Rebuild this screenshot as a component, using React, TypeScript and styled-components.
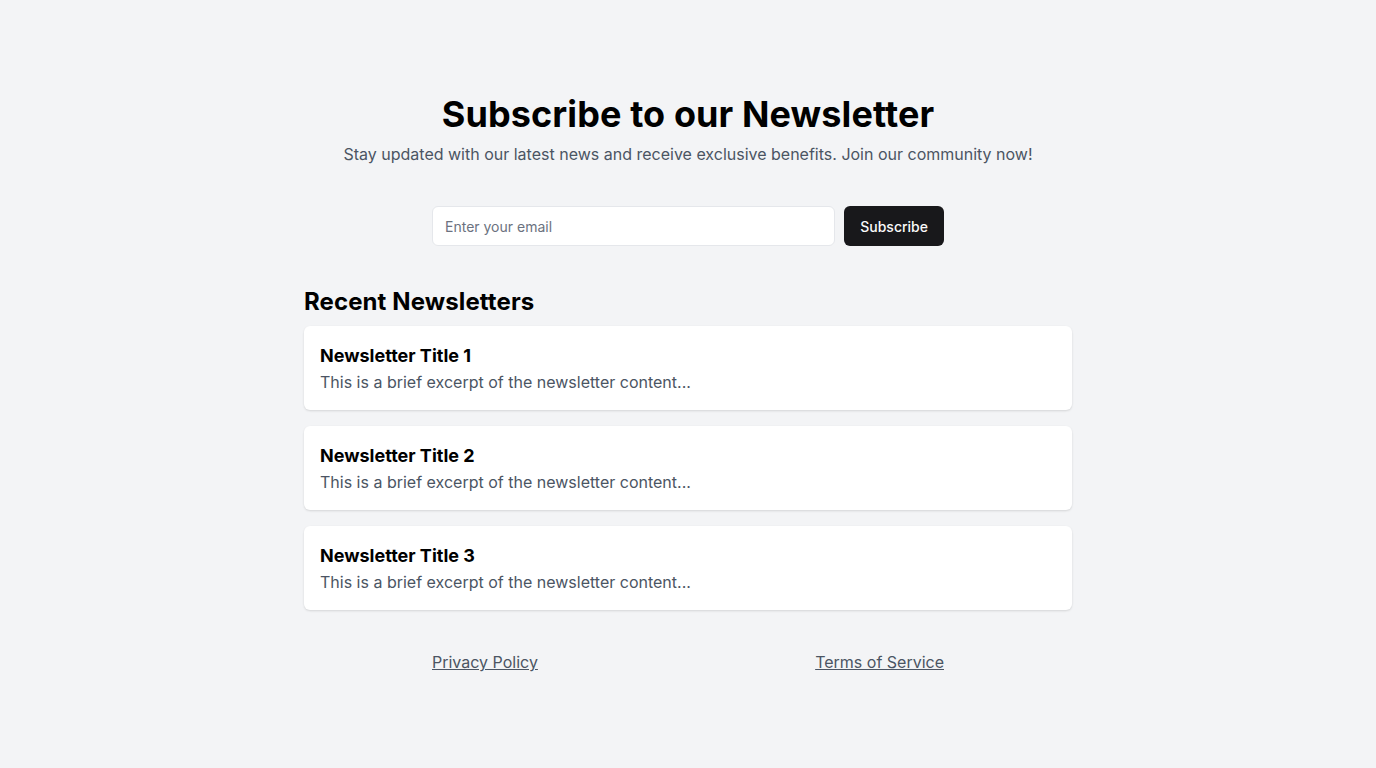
import React from "react";
import styled, { createGlobalStyle } from "styled-components";

const Global = createGlobalStyle`
  html, body { margin: 0; padding: 0; }
  body {
    background: #f3f4f6;
    font-family: Inter, "Noto Sans", sans-serif;
    color: #000;
  }
  * { box-sizing: border-box; }
`;

const Page = styled.main`
  min-height: 100vh;
  display: flex;
  flex-direction: column;
  align-items: center;
  justify-content: center;
  padding: 0 16px;
`;

const Title = styled.h1`
  margin: 0;
  font-size: 36px;
  line-height: 40px;
  font-weight: 700;
  letter-spacing: 0.1px;
  text-align: center;
`;

const Subtitle = styled.p`
  margin: 8px 0 40px;
  font-size: 16px;
  line-height: 24px;
  color: #4b5563;
  text-align: center;
`;

const Form = styled.form`
  width: 512px;
  display: flex;
  gap: 9px;
  margin-bottom: 40px;
`;

const Input = styled.input`
  flex: 1;
  height: 40px;
  padding: 0 12px;
  border: 1px solid #e5e7eb;
  border-radius: 6px;
  background: #fff;
  font-family: inherit;
  font-size: 14px;
  outline: none;
  &::placeholder { color: #6b7280; }
`;

const Button = styled.button`
  height: 40px;
  padding: 0 16px;
  border: none;
  border-radius: 6px;
  background: #18181b;
  color: #fafafa;
  font-family: inherit;
  font-size: 14px;
  font-weight: 500;
`;

const Section = styled.section`
  width: 768px;
`;

const SectionTitle = styled.h2`
  margin: 0 0 8px;
  font-size: 24px;
  line-height: 32px;
  font-weight: 700;
  letter-spacing: 0.1px;
`;

const List = styled.div`
  display: flex;
  flex-direction: column;
  gap: 16px;
`;

const Card = styled.article`
  background: #fff;
  border-radius: 6px;
  padding: 16px;
  box-shadow: 0 1px 2px 0 rgba(0, 0, 0, 0.08), 0 1px 3px 0 rgba(0, 0, 0, 0.06);
`;

const CardTitle = styled.h3`
  margin: 0;
  font-size: 18px;
  line-height: 28px;
  font-weight: 700;
`;

const Excerpt = styled.p`
  margin: 0;
  font-size: 16px;
  line-height: 24px;
  color: #4b5563;
`;

const Footer = styled.footer`
  width: 512px;
  margin-top: 40px;
  display: flex;
  justify-content: space-between;
`;

const FooterLink = styled.a`
  font-size: 16px;
  line-height: 24px;
  color: #4b5563;
  text-decoration: underline;
`;

const items = [1, 2, 3];

export default function App() {
  return (
    <>
      <Global />
      <Page>
        <Title>Subscribe to our Newsletter</Title>
        <Subtitle>
          Stay updated with our latest news and receive exclusive benefits. Join our community now!
        </Subtitle>
        <Form onSubmit={(e) => e.preventDefault()}>
          <Input type="email" placeholder="Enter your email" />
          <Button type="submit">Subscribe</Button>
        </Form>
        <Section>
          <SectionTitle>Recent Newsletters</SectionTitle>
          <List>
            {items.map((n) => (
              <Card key={n}>
                <CardTitle>Newsletter Title {n}</CardTitle>
                <Excerpt>This is a brief excerpt of the newsletter content...</Excerpt>
              </Card>
            ))}
          </List>
        </Section>
        <Footer>
          <FooterLink href="#">Privacy Policy</FooterLink>
          <FooterLink href="#">Terms of Service</FooterLink>
        </Footer>
      </Page>
    </>
  );
}
